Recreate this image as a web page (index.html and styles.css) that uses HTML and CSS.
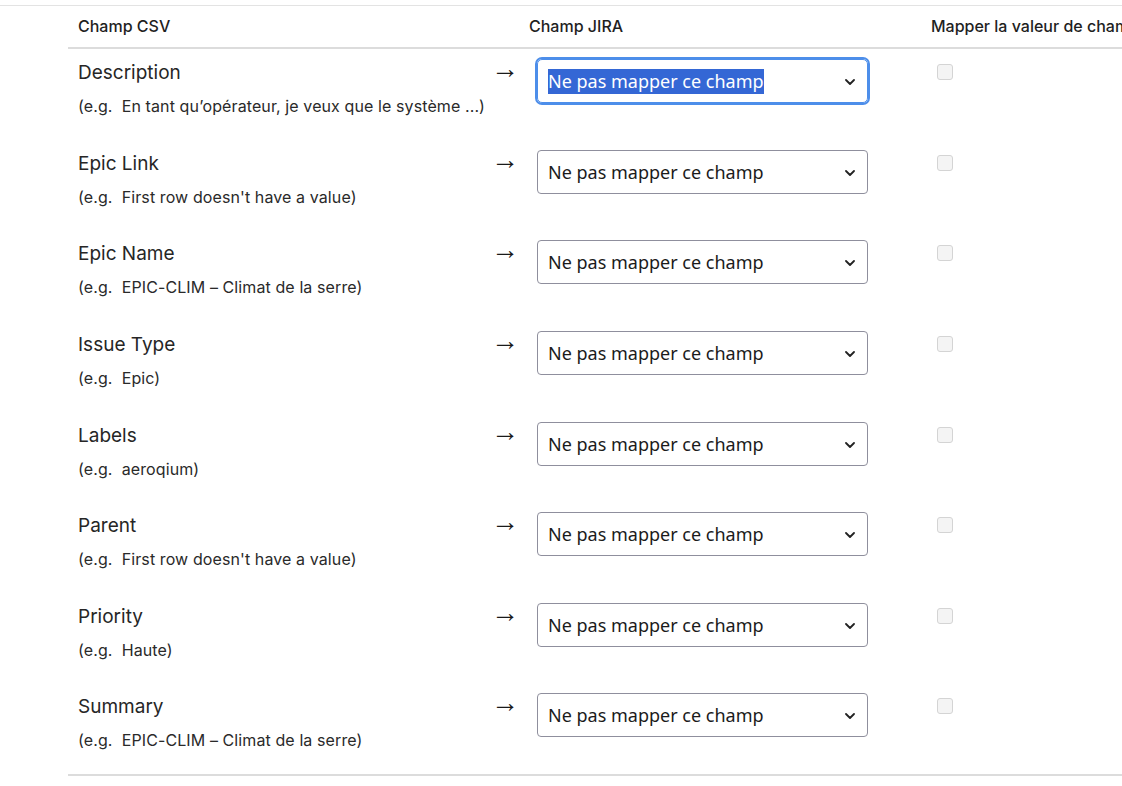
FILE: index.html
```html
<!DOCTYPE html>
<html lang="fr">
<head>
<meta charset="utf-8">
<title>Mapping des champs</title>
<link rel="stylesheet" href="styles.css">
</head>
<body>
<div class="page">
  <div class="table">
    <div class="head">
      <div class="hcell">Champ CSV</div>
      <div class="hcell">Champ JIRA</div>
      <div class="hcell">Mapper la valeur de champ</div>
    </div>

    <div class="row">
      <div class="src">
        <div class="info">
          <div class="name">Description</div>
          <div class="ex">(e.g.&nbsp; En tant qu’opérateur, je veux que le système ...)</div>
        </div>
        <span class="arrow">→</span>
      </div>
      <div class="dst">
        <div class="select focused" role="combobox"><span class="val hl">Ne pas mapper ce champ</span><svg class="chev" viewBox="0 0 10 6" width="10" height="6"><path d="M1 1l4 4 4-4" fill="none" stroke="#222" stroke-width="1.8" stroke-linecap="round" stroke-linejoin="round"/></svg></div>
      </div>
      <div class="chk"><input type="checkbox" class="box" disabled></div>
    </div>

    <div class="row">
      <div class="src">
        <div class="info">
          <div class="name">Epic Link</div>
          <div class="ex">(e.g.&nbsp; First row doesn't have a value)</div>
        </div>
        <span class="arrow">→</span>
      </div>
      <div class="dst">
        <div class="select" role="combobox"><span class="val">Ne pas mapper ce champ</span><svg class="chev" viewBox="0 0 10 6" width="10" height="6"><path d="M1 1l4 4 4-4" fill="none" stroke="#222" stroke-width="1.8" stroke-linecap="round" stroke-linejoin="round"/></svg></div>
      </div>
      <div class="chk"><input type="checkbox" class="box" disabled></div>
    </div>

    <div class="row">
      <div class="src">
        <div class="info">
          <div class="name">Epic Name</div>
          <div class="ex">(e.g.&nbsp; EPIC-CLIM – Climat de la serre)</div>
        </div>
        <span class="arrow">→</span>
      </div>
      <div class="dst">
        <div class="select" role="combobox"><span class="val">Ne pas mapper ce champ</span><svg class="chev" viewBox="0 0 10 6" width="10" height="6"><path d="M1 1l4 4 4-4" fill="none" stroke="#222" stroke-width="1.8" stroke-linecap="round" stroke-linejoin="round"/></svg></div>
      </div>
      <div class="chk"><input type="checkbox" class="box" disabled></div>
    </div>

    <div class="row">
      <div class="src">
        <div class="info">
          <div class="name">Issue Type</div>
          <div class="ex">(e.g.&nbsp; Epic)</div>
        </div>
        <span class="arrow">→</span>
      </div>
      <div class="dst">
        <div class="select" role="combobox"><span class="val">Ne pas mapper ce champ</span><svg class="chev" viewBox="0 0 10 6" width="10" height="6"><path d="M1 1l4 4 4-4" fill="none" stroke="#222" stroke-width="1.8" stroke-linecap="round" stroke-linejoin="round"/></svg></div>
      </div>
      <div class="chk"><input type="checkbox" class="box" disabled></div>
    </div>

    <div class="row">
      <div class="src">
        <div class="info">
          <div class="name">Labels</div>
          <div class="ex">(e.g.&nbsp; aeroqium)</div>
        </div>
        <span class="arrow">→</span>
      </div>
      <div class="dst">
        <div class="select" role="combobox"><span class="val">Ne pas mapper ce champ</span><svg class="chev" viewBox="0 0 10 6" width="10" height="6"><path d="M1 1l4 4 4-4" fill="none" stroke="#222" stroke-width="1.8" stroke-linecap="round" stroke-linejoin="round"/></svg></div>
      </div>
      <div class="chk"><input type="checkbox" class="box" disabled></div>
    </div>

    <div class="row">
      <div class="src">
        <div class="info">
          <div class="name">Parent</div>
          <div class="ex">(e.g.&nbsp; First row doesn't have a value)</div>
        </div>
        <span class="arrow">→</span>
      </div>
      <div class="dst">
        <div class="select" role="combobox"><span class="val">Ne pas mapper ce champ</span><svg class="chev" viewBox="0 0 10 6" width="10" height="6"><path d="M1 1l4 4 4-4" fill="none" stroke="#222" stroke-width="1.8" stroke-linecap="round" stroke-linejoin="round"/></svg></div>
      </div>
      <div class="chk"><input type="checkbox" class="box" disabled></div>
    </div>

    <div class="row">
      <div class="src">
        <div class="info">
          <div class="name">Priority</div>
          <div class="ex">(e.g.&nbsp; Haute)</div>
        </div>
        <span class="arrow">→</span>
      </div>
      <div class="dst">
        <div class="select" role="combobox"><span class="val">Ne pas mapper ce champ</span><svg class="chev" viewBox="0 0 10 6" width="10" height="6"><path d="M1 1l4 4 4-4" fill="none" stroke="#222" stroke-width="1.8" stroke-linecap="round" stroke-linejoin="round"/></svg></div>
      </div>
      <div class="chk"><input type="checkbox" class="box" disabled></div>
    </div>

    <div class="row">
      <div class="src">
        <div class="info">
          <div class="name">Summary</div>
          <div class="ex">(e.g.&nbsp; EPIC-CLIM – Climat de la serre)</div>
        </div>
        <span class="arrow">→</span>
      </div>
      <div class="dst">
        <div class="select" role="combobox"><span class="val">Ne pas mapper ce champ</span><svg class="chev" viewBox="0 0 10 6" width="10" height="6"><path d="M1 1l4 4 4-4" fill="none" stroke="#222" stroke-width="1.8" stroke-linecap="round" stroke-linejoin="round"/></svg></div>
      </div>
      <div class="chk"><input type="checkbox" class="box" disabled></div>
    </div>
  </div>
</div>
</body>
</html>
```

FILE: styles.css
```css
* { box-sizing: border-box; }

html, body {
  margin: 0;
  padding: 0;
  background: #fff;
  overflow: hidden;
}

body {
  padding-top: 5px;
  font-family: Inter, "Noto Sans", sans-serif;
  color: #242424;
}

.page {
  border-top: 1px solid #e3e3e3;
  width: 1122px;
  overflow: hidden;
}

.table {
  margin-left: 68px;
  width: 1250px;
  border-bottom: 2px solid #dcdcdc;
}

.head {
  display: grid;
  grid-template-columns: 451px 402px 1fr;
  height: 43px;
  border-bottom: 2px solid #dcdcdc;
  align-items: center;
}

.hcell {
  padding-left: 10px;
  font-size: 16px;
  font-weight: 500;
  color: #1f1f1f;
  white-space: nowrap;
  padding-bottom: 1px;
}

.row {
  display: grid;
  grid-template-columns: 451px 402px 1fr;
  height: 90.625px;
  padding-top: 10px;
}

.src {
  display: flex;
  justify-content: space-between;
  align-items: flex-start;
  padding-left: 10px;
  padding-right: 0;
}

.name {
  font-size: 19px;
  line-height: 27px;
  color: #262626;
}

.ex {
  margin-top: 9px;
  font-size: 16px;
  line-height: 22px;
  letter-spacing: 0.1px;
  color: #2a2a2a;
}

.arrow {
  font-family: "Liberation Sans", sans-serif;
  font-size: 28px;
  line-height: 20px;
  color: #1a1a1a;
}

.dst {
  padding-left: 18px;
}

.select {
  position: relative;
  display: flex;
  align-items: center;
  width: 331px;
  height: 44px;
  padding-left: 10px;
  border: 1px solid #8f8f9d;
  border-radius: 4px;
  background: #fff;
  font-family: "Noto Sans", "Open Sans", sans-serif;
  font-size: 18px;
  color: #1b1b1b;
}

.select.focused {
  border-color: #4d8eea;
  outline: 2px solid #4d8eea;
  border-radius: 5px;
}

.val.hl {
  background: #3467d5;
  color: #fff;
  line-height: 25px;
}

.chev {
  position: absolute;
  right: 12px;
  top: 19px;
}

.chk {
  padding-left: 16px;
  padding-top: 5px;
}

.box {
  appearance: none;
  -webkit-appearance: none;
  margin: 0;
  width: 16px;
  height: 16px;
  border: 1px solid #d4d4d4;
  border-radius: 3px;
  background: #f4f4f4;
  display: block;
}
```
